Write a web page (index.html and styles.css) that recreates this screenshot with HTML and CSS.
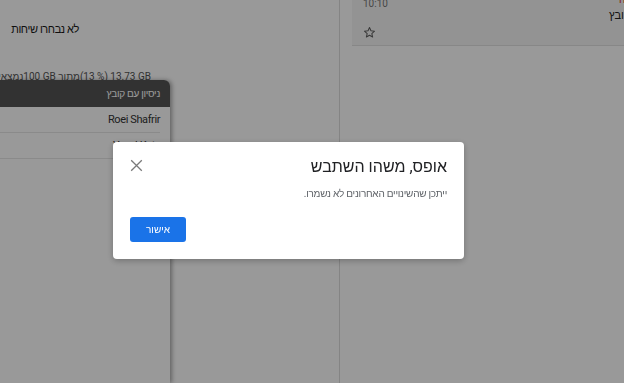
FILE: index.html
```html
<!DOCTYPE html>
<html lang="he" dir="rtl">
<head>
<meta charset="utf-8">
<title>Gmail</title>
<link rel="stylesheet" href="styles.css">
</head>
<body>
<div class="app">
  <section class="reading">
    <div class="empty-title">לא נבחרו שיחות</div>
    <div class="storage"><bdi>13.73 GB</bdi> <bdi>(13 %)</bdi>מתוך <bdi>100 GB</bdi>נמצאים כרגע בשימוש</div>
    <div class="chat">
      <div class="chat-head">ניסיון עם קובץ</div>
      <div class="chat-row">Roei Shafrir</div>
      <div class="chat-row">Yuval Katz</div>
    </div>
  </section>
  <section class="list">
    <div class="item">
      <div class="item-meta">
        <div class="time">10:10</div>
        <svg class="star" width="13" height="13" viewBox="0 0 24 24" aria-hidden="true"><path d="M12 2.8l2.7 6.1 6.6.6-5 4.4 1.5 6.5L12 17l-5.8 3.4 1.5-6.5-5-4.4 6.6-.6z" fill="none" stroke="#5f5f5f" stroke-width="1.9" stroke-linejoin="round"/></svg>
      </div>
      <div class="item-text">
        <div class="draft">טיוטה</div>
        <div class="subject">ניסיון עם קובץ</div>
      </div>
    </div>
  </section>
</div>
<div class="scrim"></div>
<div class="dialog" role="dialog">
  <div class="dialog-head">
    <h2 class="dialog-title">אופס, משהו השתבש</h2>
    <svg class="close" width="13" height="13" viewBox="0 0 13 13" aria-hidden="true"><path d="M1.2 1.2L11.8 11.8M11.8 1.2L1.2 11.8" stroke="#7a7a7a" stroke-width="1.3"/></svg>
  </div>
  <p class="dialog-body">ייתכן שהשינויים האחרונים לא נשמרו.</p>
  <div class="dialog-actions">
    <button class="ok">אישור</button>
  </div>
</div>
</body>
</html>
```
FILE: styles.css
```css
* { box-sizing: border-box; }
html, body { margin: 0; height: 100%; }
body {
  overflow: hidden;
  background: #fff;
  font-family: Roboto, "Liberation Sans", "DejaVu Sans", sans-serif;
  color: #202124;
}
.app {
  direction: ltr;
  display: flex;
  height: 100vh;
}
.reading {
  direction: rtl;
  position: relative;
  width: 340px;
  flex: 0 0 340px;
  border-right: 1px solid #dcdcdc;
  overflow: hidden;
}
.empty-title {
  padding-top: 23px;
  padding-right: 260px;
  font-size: 11px;
  letter-spacing: -0.4px;
  line-height: 14px;
  color: #1a1a1a;
  white-space: nowrap;
}
.storage {
  margin-top: 34px;
  padding-right: 188px;
  font-size: 10px;
  line-height: 12px;
  color: #555;
  white-space: nowrap;
}
.chat {
  position: absolute;
  left: 0;
  top: 80px;
  width: 170px;
  bottom: 0;
  background: #fff;
  border-top-right-radius: 6px;
  box-shadow: 2px 0 4px rgba(0,0,0,.35);
}
.chat-head {
  height: 27px;
  line-height: 27px;
  background: #545454;
  color: #fff;
  font-size: 10px;
  letter-spacing: -0.3px;
  padding-right: 10px;
  border-top-right-radius: 6px;
}
.chat-row {
  height: 26px;
  line-height: 25px;
  margin-right: 10px;
  font-size: 11px;
  letter-spacing: -0.4px;
  color: #333;
  border-bottom: 1px solid #e6e6e6;
  text-align: right;
}
.list {
  flex: 1;
  padding-left: 12px;
  overflow: hidden;
}
.item {
  display: flex;
  justify-content: space-between;
  height: 46px;
  background: #f6f6f6;
  border-bottom: 1px solid #e2e2e2;
  overflow: hidden;
}
.item-meta {
  padding-left: 11px;
  display: flex;
  flex-direction: column;
  align-items: flex-start;
}
.time {
  margin-top: -2px;
  font-size: 10px;
  line-height: 12px;
  color: #777;
}
.star { margin-top: 16px; }
.item-text {
  direction: rtl;
  flex: 0 0 80px;
  width: 80px;
  margin-right: -65px;
  margin-top: -6px;
  text-align: left;
  white-space: nowrap;
}
.draft {
  padding-left: 10px;
  font-size: 10px;
  line-height: 12px;
  color: #d93025;
}
.subject {
  margin-top: 4px;
  font-size: 11px;
  line-height: 12px;
  color: #222;
}
.scrim {
  position: fixed;
  inset: 0;
  background: rgba(0,0,0,.4);
}
.dialog {
  position: fixed;
  left: 113px;
  top: 142px;
  width: 351px;
  height: 117px;
  background: #fff;
  border-radius: 4px;
  box-shadow: 0 2px 6px rgba(0,0,0,.25);
  padding: 15px 17px 17px 17px;
  display: flex;
  flex-direction: column;
}
.dialog-head {
  display: flex;
  justify-content: space-between;
  align-items: center;
  height: 20px;
}
.dialog-title {
  margin: 0;
  font-size: 16px;
  line-height: 20px;
  font-weight: 400;
  color: #202124;
}
.close { margin-top: -3px; }
.dialog-body {
  margin: 10px 0 0;
  font-size: 10px;
  letter-spacing: -0.25px;
  line-height: 14px;
  color: #5f6368;
}
.dialog-actions {
  margin-top: 16px;
  display: flex;
  justify-content: flex-end;
}
.ok {
  width: 56px;
  height: 25px;
  border: 0;
  border-radius: 3px;
  background: #1a73e8;
  color: #fff;
  font-family: inherit;
  font-size: 10px;
  padding: 0;
}
```
